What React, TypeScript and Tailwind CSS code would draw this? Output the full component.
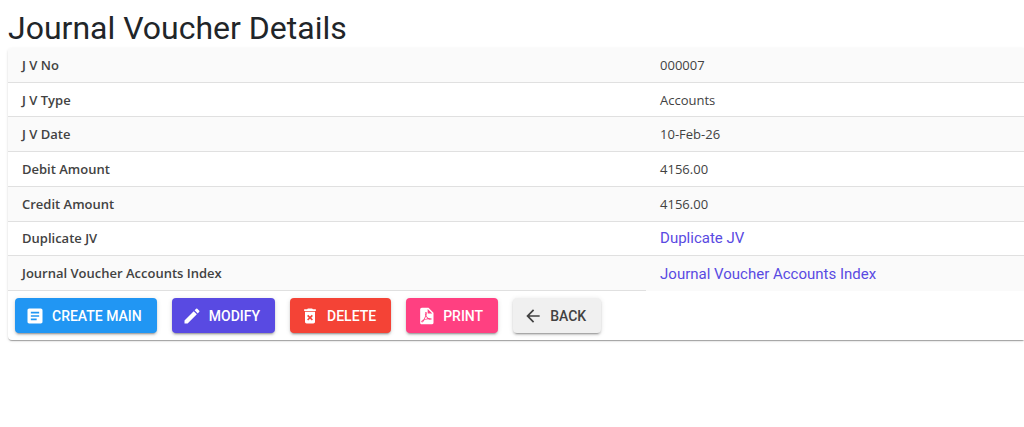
import { MdArticle, MdEdit, MdDeleteForever, MdArrowBack } from "react-icons/md";

const PdfIcon = ({ className }: { className?: string }) => (
  <svg viewBox="0 0 24 24" fill="currentColor" className={className} aria-hidden="true">
    <path d="M14,9H19.5L14,3.5V9M7,2H15L21,8V20A2,2 0 0,1 19,22H7C5.89,22 5,21.1 5,20V4A2,2 0 0,1 7,2M11.93,12.44C12.34,13.34 12.86,14.08 13.46,14.59L13.87,14.91C13,15.07 11.8,15.35 10.53,15.84V15.84L10.42,15.88L10.92,14.84C11.37,13.97 11.7,13.18 11.93,12.44M18.41,16.25C18.59,16.07 18.68,15.84 18.69,15.59C18.72,15.39 18.67,15.2 18.57,15.04C18.28,14.57 17.53,14.35 16.29,14.35L15,14.42L14.13,13.84C13.5,13.32 12.93,12.41 12.53,11.28L12.57,11.14C12.9,9.81 13.21,8.2 12.55,7.54C12.39,7.38 12.17,7.3 11.94,7.3H11.7C11.33,7.3 11,7.69 10.91,8.07C10.54,9.4 10.76,10.13 11.13,11.34V11.35C10.88,12.23 10.56,13.25 10.05,14.28L9.09,16.08L8.2,16.57C7,17.32 6.43,18.16 6.32,18.69C6.28,18.88 6.3,19.05 6.37,19.23L6.4,19.28L6.88,19.59L7.32,19.7C8.13,19.7 9.05,18.75 10.29,16.63L10.47,16.56C11.5,16.23 12.78,16 14.5,15.81C15.53,16.32 16.74,16.55 17.5,16.55C17.94,16.55 18.24,16.44 18.41,16.25M17.83,15.54L17.92,15.65C17.91,15.75 17.88,15.76 17.83,15.78H17.79L17.6,15.8C17.14,15.8 16.43,15.61 15.7,15.29C15.79,15.19 15.83,15.19 15.93,15.19C17.33,15.19 17.73,15.44 17.83,15.54M8.65,17.03C8,18.22 7.41,18.88 6.96,19.03C7.01,18.65 7.46,17.99 8.17,17.34L8.65,17.03M11.77,10.13C11.54,9.23 11.53,8.5 11.7,8.07L11.77,7.95L11.92,8C12.09,8.24 12.11,8.56 12.02,9.1L11.99,9.26L11.83,10.08L11.77,10.13Z" />
  </svg>
);

const rows: { label: string; value: string; link?: boolean }[] = [
  { label: "J V No", value: "000007" },
  { label: "J V Type", value: "Accounts" },
  { label: "J V Date", value: "10-Feb-26" },
  { label: "Debit Amount", value: "4156.00" },
  { label: "Credit Amount", value: "4156.00" },
  { label: "Duplicate JV", value: "Duplicate JV", link: true },
  { label: "Journal Voucher Accounts Index", value: "Journal Voucher Accounts Index", link: true },
];

const actions = [
  { label: "CREATE MAIN", Icon: MdArticle, tone: "bg-[#2196f3] text-white" },
  { label: "MODIFY", Icon: MdEdit, tone: "bg-[#594ae2] text-white" },
  { label: "DELETE", Icon: MdDeleteForever, tone: "bg-[#f44336] text-white" },
  { label: "PRINT", Icon: PdfIcon, tone: "bg-[#ff4081] text-white" },
  { label: "BACK", Icon: MdArrowBack, tone: "bg-[#f0f0f0] text-[#424242]" },
];

export default function App() {
  return (
    <main className="overflow-hidden bg-white pb-4 pl-2 pt-2 font-['Roboto',sans-serif]">
      <h1 className="text-[32px] leading-10 text-[#212529]">Journal Voucher Details</h1>
      <section className="rounded-l bg-white pb-[7px] shadow-[0_2px_1px_-1px_rgba(0,0,0,0.2),0_1px_1px_0_rgba(0,0,0,0.14),0_1px_3px_0_rgba(0,0,0,0.12)]">
        <table className="h-[243px] w-full table-fixed border-separate border-spacing-0 text-left text-[13px] leading-5 text-[#424242]">
          <colgroup>
            <col className="w-[62.8%]" />
            <col />
          </colgroup>
          <tbody>
            {rows.map(({ label, value, link }) => (
              <tr key={label} className="group">
                <th scope="row" className="border-b border-[#e0e0e0] pl-[14px] font-['Open_Sans',sans-serif] font-semibold group-odd:bg-[#fafafa] group-first:rounded-tl">
                  {label}
                </th>
                <td className="border-b border-[#e0e0e0] pl-[14px] font-['Open_Sans',sans-serif] group-odd:bg-[#fafafa] group-last:border-b-0">
                  {link ? (
                    <a href="#" className="font-['Roboto',sans-serif] text-[15px] leading-5 text-[#594ae2]">{value}</a>
                  ) : (
                    value
                  )}
                </td>
              </tr>
            ))}
          </tbody>
        </table>
        <div className="flex flex-wrap gap-[15px] pl-[7px] pt-[7px]">
          {actions.map(({ label, Icon, tone }) => (
            <button
              key={label}
              type="button"
              className={`${tone} flex h-[35px] items-center gap-[7px] rounded px-[15px] text-sm font-medium shadow-[0_3px_1px_-2px_rgba(0,0,0,0.2),0_2px_2px_0_rgba(0,0,0,0.14),0_1px_5px_0_rgba(0,0,0,0.12)]`}
            >
              <Icon className="-ml-[5px] size-5" />
              {label}
            </button>
          ))}
        </div>
      </section>
    </main>
  );
}
